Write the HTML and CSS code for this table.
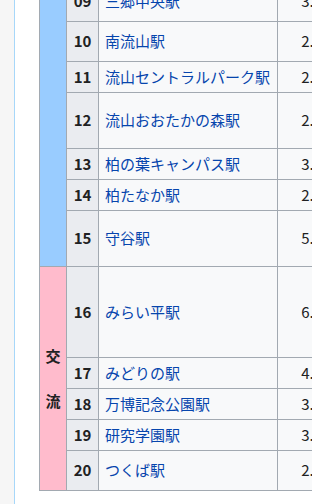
FILE: index.html
```html
<!DOCTYPE html>
<html lang="ja">
<head>
<meta charset="utf-8">
<link rel="stylesheet" href="styles.css">
</head>
<body>
<div class="page">
  <div class="content">
    <table class="wikitable">
      <colgroup>
        <col class="c-type"><col class="c-no"><col class="c-name"><col class="c-km"><col class="c-total">
      </colgroup>
      <tbody>
        <tr class="h40"><th rowspan="7" class="dc"></th><th>09</th><td><a href="#">三郷中央駅</a></td><td class="num">3.7</td><td class="num">19.3</td></tr>
        <tr class="h40"><th>10</th><td><a href="#">南流山駅</a></td><td class="num">2.8</td><td class="num">22.1</td></tr>
        <tr class="h31"><th>11</th><td><a href="#">流山セントラルパーク駅</a></td><td class="num">2.2</td><td class="num">24.3</td></tr>
        <tr class="h56"><th>12</th><td><a href="#">流山おおたかの森駅</a></td><td class="num">2.2</td><td class="num">26.5</td></tr>
        <tr class="h31"><th>13</th><td><a href="#">柏の葉キャンパス駅</a></td><td class="num">3.5</td><td class="num">30.0</td></tr>
        <tr class="h31"><th>14</th><td><a href="#">柏たなか駅</a></td><td class="num">2.0</td><td class="num">32.0</td></tr>
        <tr class="h56"><th>15</th><td><a href="#">守谷駅</a></td><td class="num">5.7</td><td class="num">37.7</td></tr>
        <tr class="h91"><th rowspan="5" class="ac">交<br><br>流</th><th>16</th><td><a href="#">みらい平駅</a></td><td class="num">6.6</td><td class="num">44.3</td></tr>
        <tr class="h31"><th>17</th><td><a href="#">みどりの駅</a></td><td class="num">4.3</td><td class="num">48.6</td></tr>
        <tr class="h31"><th>18</th><td><a href="#">万博記念公園駅</a></td><td class="num">3.2</td><td class="num">51.8</td></tr>
        <tr class="h31"><th>19</th><td><a href="#">研究学園駅</a></td><td class="num">3.8</td><td class="num">55.6</td></tr>
        <tr class="h40"><th>20</th><td><a href="#">つくば駅</a></td><td class="num">2.7</td><td class="num">58.3</td></tr>
      </tbody>
    </table>
  </div>
</div>
</body>
</html>
```

FILE: styles.css
```css
html, body {
  margin: 0;
  padding: 0;
}
body {
  background: #f6f6f6;
  font-family: "Noto Sans CJK JP", "Noto Sans", sans-serif;
  color: #202122;
  overflow: hidden;
}
.page {
  margin-left: 14px;
  border-left: 1px solid #a7d7f9;
  background: #ffffff;
  min-height: 504px;
  overflow: hidden;
}
.content {
  padding-left: 24px;
}
.wikitable {
  border-collapse: collapse;
  border: 1px solid #a2a9b1;
  table-layout: fixed;
  width: 350px;
  margin-top: -19px;
  font-size: 15px;
  line-height: 1.5;
  background: #f8f9fa;
  color: #202122;
}
.c-type { width: 27px; }
.c-no { width: 32px; }
.c-name { width: 179px; }
.c-km { width: 51px; }
.c-total { width: 61px; }
.wikitable th,
.wikitable td {
  border: 1px solid #a2a9b1;
  padding: 0 6px;
  vertical-align: middle;
  white-space: nowrap;
}
.wikitable th {
  background: #eaecf0;
  font-weight: bold;
  text-align: center;
}
.wikitable th.dc {
  background: #99ccff;
  padding: 0;
}
.wikitable th.ac {
  background: #ffbbcc;
  padding: 0;
}
.wikitable td {
  text-align: left;
}
.wikitable td.num {
  text-align: right;
}
.wikitable a {
  color: #0645ad;
  text-decoration: none;
}
.h31 { height: 31px; }
.h40 { height: 40px; }
.h56 { height: 56px; }
.h91 { height: 91px; }
```
